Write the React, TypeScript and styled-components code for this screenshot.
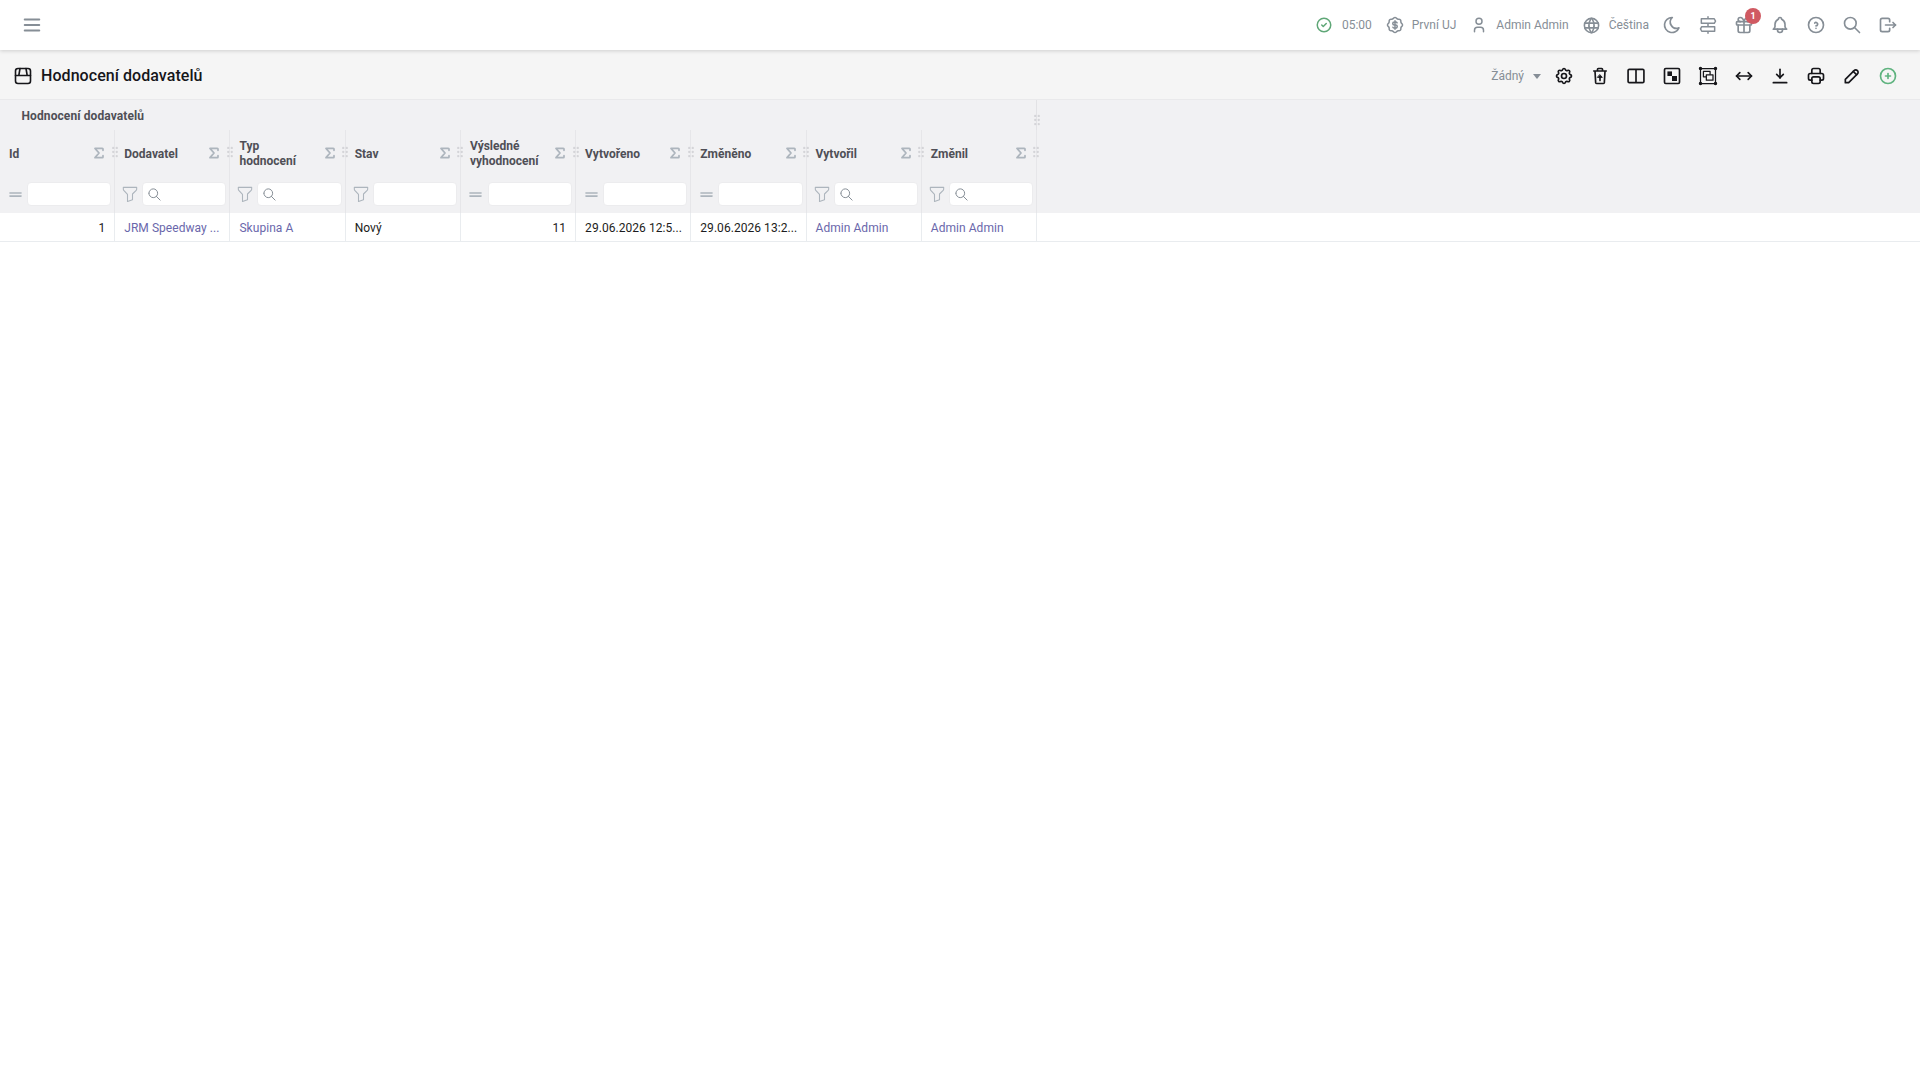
import React from 'react'
import styled, { createGlobalStyle } from 'styled-components'
import {
  TbCircleCheck,
  TbUser,
  TbWorld,
  TbMoon,
  TbGift,
  TbBell,
  TbHelpCircle,
  TbSearch,
  TbLogout,
  TbSettings,
  TbArrowsHorizontal,
  TbArrowBarToDown,
  TbPrinter,
  TbPencil,
  TbCirclePlus,
  TbFilter,
  TbEqual,
  TbSum,
  TbGripVertical,
  TbMenu2,
} from 'react-icons/tb'

const GlobalStyle = createGlobalStyle`
  html, body {
    margin: 0;
    height: 100%;
    background: #ffffff;
    font-family: Roboto, "Liberation Sans", sans-serif;
  }
  * { box-sizing: border-box; }
`

const Page = styled.div`
  width: 1920px;
  min-height: 1080px;
  background: #fff;
`

const TopBar = styled.header`
  height: 50px;
  display: flex;
  align-items: center;
  justify-content: space-between;
  padding: 0 14px;
  background: #fff;
  box-shadow: 0 1px 4px rgba(0, 0, 0, 0.16);
  position: relative;
  color: #868e96;
`

const IconSlot = styled.div<{ $color?: string; $narrow?: boolean }>`
  position: relative;
  width: ${({ $narrow }) => ($narrow ? 24 : 36)}px;
  height: 36px;
  display: flex;
  align-items: center;
  justify-content: center;
  color: ${({ $color }) => $color || 'inherit'};
  flex: none;
`

const TopGroup = styled.div`
  display: flex;
  align-items: center;
`

const TopLabel = styled.span<{ $first?: boolean }>`
  font-size: 12px;
  color: #868e96;
  margin-left: ${({ $first }) => ($first ? 6 : -1)}px;
  margin-right: 5px;
  white-space: nowrap;
`

const Badge = styled.span`
  position: absolute;
  top: 1px;
  left: 19px;
  width: 16px;
  height: 16px;
  border-radius: 50%;
  background: #d05a62;
  color: #fff;
  font-size: 9px;
  font-weight: 700;
  display: flex;
  align-items: center;
  justify-content: center;
`

const ToolBar = styled.div`
  height: 50px;
  display: flex;
  align-items: center;
  justify-content: space-between;
  padding: 2px 14px 0 13px;
  background: #f5f5f5;
  border-bottom: 1px solid #e9e9eb;
  color: #16161a;
`

const TitleWrap = styled.div`
  display: flex;
  align-items: center;
  gap: 8px;
`

const Title = styled.h1`
  margin: 0;
  font-size: 16px;
  line-height: 20px;
  font-weight: 500;
  letter-spacing: 0.06px;
  color: #16161a;
`

const ToolGroup = styled.div`
  display: flex;
  align-items: center;
`

const ViewSelect = styled.div`
  display: flex;
  align-items: center;
  gap: 9px;
  margin-right: 5px;
  font-size: 12px;
  color: #868e96;
`

const Caret = styled.span`
  width: 0;
  height: 0;
  border-left: 4.5px solid transparent;
  border-right: 4.5px solid transparent;
  border-top: 5px solid #868e96;
  margin-top: 2px;
`

const TableHead = styled.div`
  background: #f1f1f3;
`

const GroupRow = styled.div`
  width: 1037px;
  height: 30px;
  position: relative;
  display: flex;
  align-items: center;
  padding: 2px 21.5px 0;
  font-size: 12px;
  font-weight: 700;
  letter-spacing: 0.1px;
  color: #4f4f56;
  border-right: 1px solid #e2e2e5;
`

const Grid = styled.div`
  display: grid;
  grid-template-columns: repeat(9, 115.22px);
`

const HeadCell = styled.div`
  position: relative;
  height: 46px;
  display: flex;
  align-items: center;
  justify-content: space-between;
  padding: 2px 9px 0;
  font-size: 12px;
  line-height: 15px;
  font-weight: 700;
  color: #4f4f56;
  border-right: 1px solid #e6e6e9;
`

const Handle = styled.span<{ $top?: number }>`
  position: absolute;
  right: -7.5px;
  top: ${({ $top }) => $top ?? 15}px;
  color: #d4d4d8;
  display: flex;
  z-index: 1;
`

const SumIcon = styled.span`
  color: #adb5bd;
  display: flex;
  margin-right: -2px;
  margin-top: -3px;
`

const FilterCell = styled.div`
  height: 37px;
  display: flex;
  align-items: center;
  gap: 2px;
  padding: 0 3px 1px 5px;
  color: #adb5bd;
  border-right: 1px solid #e6e6e9;
`

const FilterSign = styled.span`
  width: 20px;
  flex: none;
  display: flex;
  align-items: center;
  justify-content: center;
`

const InputBox = styled.div`
  flex: 1;
  height: 24px;
  background: #fff;
  border: 1px solid #ececee;
  border-radius: 4px;
  display: flex;
  align-items: center;
  padding-left: 4px;
  color: #868e96;
`

const BodyRow = styled(Grid)`
  height: 29px;
  background: #fff;
  border-bottom: 1px solid #e9ecef;
`

const BodyCell = styled.div<{ $right?: boolean; $link?: boolean }>`
  height: 28px;
  display: flex;
  align-items: center;
  justify-content: ${({ $right }) => ($right ? 'flex-end' : 'flex-start')};
  padding: 2px 9px 0;
  font-size: 12px;
  letter-spacing: 0.05px;
  color: ${({ $link }) => ($link ? '#6a67ab' : '#1c1c20')};
  border-right: 1px solid #e9ecef;
  white-space: nowrap;
  overflow: hidden;
`

const TitleIcon = () => (
  <svg width="20" height="20" viewBox="0 0 20 20" fill="none" stroke="currentColor" strokeWidth="1.6" strokeLinejoin="round" strokeLinecap="round">
    <rect x="2.5" y="2.5" width="15" height="15" rx="2.5" />
    <path d="M2.5 9.5h15M7 2.500l-1.200 7M13 2.500l1.200 7" />
  </svg>
)

const SignpostIcon = () => (
  <svg width="20" height="20" viewBox="0 0 24 24" fill="none" stroke="currentColor" strokeWidth="1.8" strokeLinejoin="round" strokeLinecap="round">
    <path d="M12 2v2.500M12 10v4M12 19.500V22M4 4.500h15.500L21 7.250 19.500 10H4zM20 14H4.500L3 16.750l1.500 2.750H20z" />
  </svg>
)

const TrashUpIcon = () => (
  <svg width="20" height="20" viewBox="0 0 24 24" fill="none" stroke="currentColor" strokeWidth="2" strokeLinejoin="round" strokeLinecap="round">
    <path d="M4.500 6h15M9 6V4a1 1 0 0 1 1-1h4a1 1 0 0 1 1 1v2M6 6l.8 14a1.500 1.500 0 0 0 1.500 1h7.400a1.500 1.500 0 0 0 1.500-1L18 6" />
    <path d="M12 17.500v-4" />
    <path d="M12 10.500l2.800 3.200H9.200z" fill="currentColor" strokeWidth="1" />
  </svg>
)

const ColumnsIcon = () => (
  <svg width="20" height="20" viewBox="0 0 24 24" fill="none" stroke="currentColor" strokeWidth="2" strokeLinejoin="round">
    <rect x="2.500" y="4" width="19" height="16" rx="1.500" />
    <path d="M12 4v16" />
  </svg>
)

const CheckerIcon = () => (
  <svg width="20" height="20" viewBox="0 0 24 24" fill="none" stroke="currentColor" strokeWidth="2" strokeLinejoin="round">
    <rect x="3" y="3" width="18" height="18" rx="1.500" />
    <rect x="6.500" y="6.500" width="5.500" height="5.500" fill="currentColor" stroke="none" />
    <rect x="12" y="12" width="6" height="6" fill="currentColor" stroke="none" />
  </svg>
)

const FrameIcon = () => (
  <svg width="20" height="20" viewBox="0 0 24 24" fill="none" stroke="currentColor" strokeWidth="1.500" strokeLinejoin="round">
    <rect x="3" y="3" width="18" height="18" />
    <rect x="6.500" y="6.500" width="8" height="6.500" />
    <rect x="10" y="10.500" width="8" height="6.500" fill="#f5f5f5" />
    <circle cx="3" cy="3" r="1.300" fill="currentColor" />
    <circle cx="21" cy="3" r="1.300" fill="currentColor" />
    <circle cx="3" cy="21" r="1.300" fill="currentColor" />
    <circle cx="21" cy="21" r="1.300" fill="currentColor" />
  </svg>
)

const DollarBadge = () => (
  <svg width="20" height="20" viewBox="0 0 24 24" fill="none" stroke="currentColor" strokeWidth="1.800" strokeLinejoin="round" strokeLinecap="round">
    <path d="M5 7.200A2.200 2.200 0 0 1 7.200 5h1a2.200 2.200 0 0 0 1.550-.64l.7-.7a2.200 2.200 0 0 1 3.120 0l.7.7c.41.41.97.64 1.550.64h1a2.200 2.200 0 0 1 2.200 2.200v1c0 .58.230 1.140.64 1.550l.7.7a2.200 2.200 0 0 1 0 3.120l-.7.7a2.200 2.200 0 0 0-.64 1.550v1a2.200 2.200 0 0 1-2.200 2.200h-1a2.200 2.200 0 0 0-1.550.64l-.7.7a2.200 2.200 0 0 1-3.120 0l-.7-.7a2.200 2.200 0 0 0-1.550-.64h-1a2.200 2.200 0 0 1-2.200-2.200v-1a2.200 2.200 0 0 0-.64-1.550l-.7-.7a2.200 2.200 0 0 1 0-3.120l.7-.7A2.200 2.200 0 0 0 5 8.200v-1" />
    <path d="M14.500 9.500a1.800 1.800 0 0 0-1.600-1h-1.800a1.800 1.800 0 0 0 0 3.600h1.800a1.800 1.800 0 0 1 0 3.600h-1.800a1.800 1.800 0 0 1-1.600-1M12 7v10" />
  </svg>
)

type Column = { title: React.ReactNode; filter: 'eq' | 'select' | 'search' }

const columns: Column[] = [
  { title: 'Id', filter: 'eq' },
  { title: 'Dodavatel', filter: 'search' },
  { title: <>Typ<br />hodnocení</>, filter: 'search' },
  { title: 'Stav', filter: 'select' },
  { title: <>Výsledné<br />vyhodnocení</>, filter: 'eq' },
  { title: 'Vytvořeno', filter: 'eq' },
  { title: 'Změněno', filter: 'eq' },
  { title: 'Vytvořil', filter: 'search' },
  { title: 'Změnil', filter: 'search' },
]

const cells = [
  { text: '1', right: true },
  { text: 'JRM Speedway ...', link: true },
  { text: 'Skupina A', link: true },
  { text: 'Nový' },
  { text: '11', right: true },
  { text: '29.06.2026 12:5...' },
  { text: '29.06.2026 13:2...' },
  { text: 'Admin Admin', link: true },
  { text: 'Admin Admin', link: true },
]

const App: React.FC = () => {
  return (
    <Page>
      <GlobalStyle />
      <TopBar>
        <IconSlot $color="#868e96"><TbMenu2 size={22} /></IconSlot>
        <TopGroup>
          <IconSlot $color="#5fa777" $narrow><TbCircleCheck size={18} /></IconSlot>
          <TopLabel $first>05:00</TopLabel>
          <IconSlot><DollarBadge /></IconSlot>
          <TopLabel>První UJ</TopLabel>
          <IconSlot><TbUser size={18} /></IconSlot>
          <TopLabel>Admin Admin</TopLabel>
          <IconSlot><TbWorld size={19} /></IconSlot>
          <TopLabel>Čeština</TopLabel>
          <IconSlot><TbMoon size={20} /></IconSlot>
          <IconSlot><SignpostIcon /></IconSlot>
          <IconSlot>
            <TbGift size={20} />
            <Badge>1</Badge>
          </IconSlot>
          <IconSlot><TbBell size={20} /></IconSlot>
          <IconSlot><TbHelpCircle size={20} /></IconSlot>
          <IconSlot><TbSearch size={20} /></IconSlot>
          <IconSlot><TbLogout size={20} /></IconSlot>
        </TopGroup>
      </TopBar>
      <ToolBar>
        <TitleWrap>
          <TitleIcon />
          <Title>Hodnocení dodavatelů</Title>
        </TitleWrap>
        <ToolGroup>
          <ViewSelect>Žádný<Caret /></ViewSelect>
          <IconSlot><TbSettings size={20} /></IconSlot>
          <IconSlot><TrashUpIcon /></IconSlot>
          <IconSlot><ColumnsIcon /></IconSlot>
          <IconSlot><CheckerIcon /></IconSlot>
          <IconSlot><FrameIcon /></IconSlot>
          <IconSlot><TbArrowsHorizontal size={20} /></IconSlot>
          <IconSlot><TbArrowBarToDown size={20} /></IconSlot>
          <IconSlot><TbPrinter size={20} /></IconSlot>
          <IconSlot><TbPencil size={20} /></IconSlot>
          <IconSlot $color="#5fb37f"><TbCirclePlus size={20} /></IconSlot>
        </ToolGroup>
      </ToolBar>
      <TableHead>
        <GroupRow>
          Hodnocení dodavatelů
          <Handle $top={13}><TbGripVertical size={14} /></Handle>
        </GroupRow>
        <Grid>
          {columns.map((col, i) => (
            <HeadCell key={i}>
              <span>{col.title}</span>
              <SumIcon><TbSum size={16} strokeWidth={2.6} /></SumIcon>
              <Handle><TbGripVertical size={14} /></Handle>
            </HeadCell>
          ))}
        </Grid>
        <Grid>
          {columns.map((col, i) => (
            <FilterCell key={i}>
              <FilterSign>
                {col.filter === 'eq' ? <TbEqual size={19} /> : <TbFilter size={20} strokeWidth={1.3} />}
              </FilterSign>
              <InputBox>
                {col.filter === 'search' && <TbSearch size={15} strokeWidth={1.6} />}
              </InputBox>
            </FilterCell>
          ))}
        </Grid>
      </TableHead>
      <BodyRow>
        {cells.map((cell, i) => (
          <BodyCell key={i} $right={cell.right} $link={cell.link}>{cell.text}</BodyCell>
        ))}
      </BodyRow>
    </Page>
  )
}

export default App
